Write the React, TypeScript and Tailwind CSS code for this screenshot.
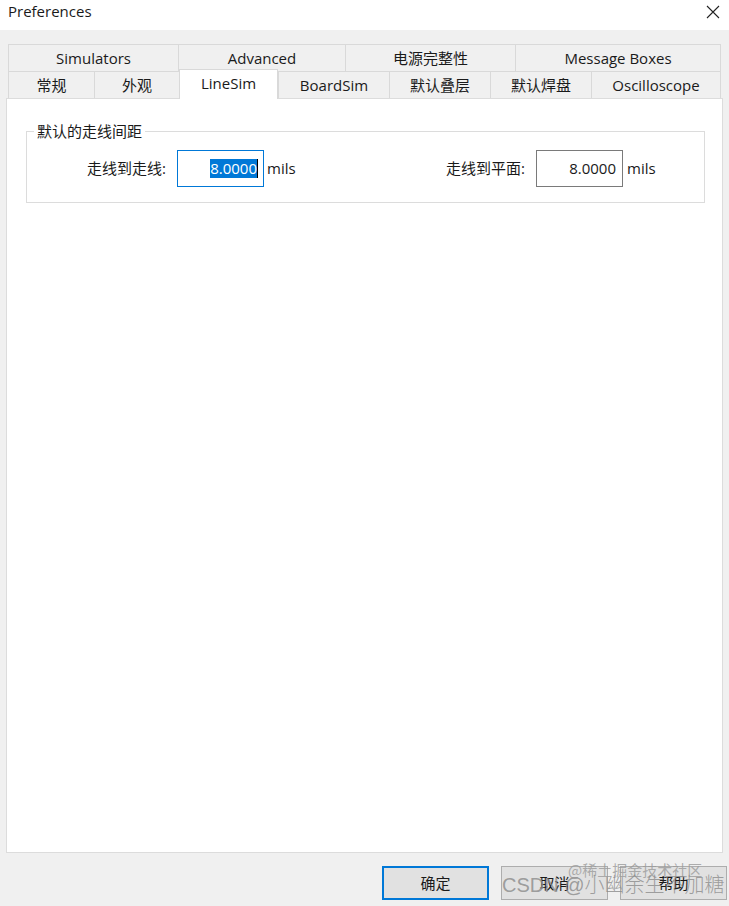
import React from "react";

const font = { fontFamily: '"Open Sans", "Noto Sans CJK SC", sans-serif' };

function Tab({ label, w, selected }: { label: string; w: number; selected?: boolean }) {
  return (
    <div
      style={{ width: w }}
      className={
        selected
          ? "relative z-10 -mt-[2px] -mb-[1px] flex h-[30px] items-start justify-center border border-b-0 border-[#d9d9d9] bg-white pt-[2px] text-[15px] text-[#1a1a1a]"
          : "flex h-[27px] items-center justify-center border-l border-t border-[#d9d9d9] bg-[#f0f0f0] text-[15px] text-[#1a1a1a] last:border-r"
      }
    >
      {label}
    </div>
  );
}

export default function App() {
  return (
    <div style={font} className="relative flex h-[906px] w-[729px] flex-col overflow-hidden bg-[#f0f0f0] text-[#1a1a1a]">
      {/* Title bar */}
      <div className="flex h-[30px] items-center justify-between bg-white pl-[8px] pr-[6px]">
        <span className="-mt-[7px] text-[15px]">Preferences</span>
        <svg width="16" height="16" viewBox="0 0 16 16" className="-mt-[6px] mr-[2px]">
          <path d="M2 2 L14 14 M14 2 L2 14" stroke="#222" strokeWidth="1.1" fill="none" />
        </svg>
      </div>

      {/* Tabs */}
      <div className="mt-[14px] flex flex-col pl-[8px]">
        <div className="flex">
          <Tab label="Simulators" w={170} />
          <Tab label="Advanced" w={167} />
          <Tab label="电源完整性" w={170} />
          <Tab label="Message Boxes" w={206} />
        </div>
        <div className="flex items-end">
          <Tab label="常规" w={86} />
          <Tab label="外观" w={85} />
          <Tab label="LineSim" w={99} selected />
          <Tab label="BoardSim" w={111} />
          <Tab label="默认叠层" w={101} />
          <Tab label="默认焊盘" w={101} />
          <Tab label="Oscilloscope" w={130} />
        </div>
      </div>

      {/* Panel */}
      <div className="mx-[6px] h-[755px] border border-[#dcdcdc] bg-white pl-[19px] pr-[17px] pt-[23px]">
        <fieldset className="h-[81px] border border-[#dcdcdc] px-0">
          <legend className="ml-[7px] px-[3px] text-[15px] leading-[18px]">默认的走线间距</legend>
          <div className="mt-[10px] flex items-center text-[15px]">
            <span className="w-[139px] text-right">走线到走线:</span>
            <div className="ml-[11px] flex h-[37px] w-[87px] items-center justify-end border border-[#0078d7] pr-[5px]">
              <span className="bg-[#0078d7] text-[15px] leading-[19px] text-white">8.0000</span>
              <span className="h-[19px] w-[1px] bg-black" />
            </div>
            <span className="ml-[3px] w-[35px] text-[15px]">mils</span>
            <span className="w-[223px] text-right">走线到平面:</span>
            <div className="ml-[11px] flex h-[37px] w-[87px] items-center justify-end border border-[#7a7a7a] pr-[6px]">
              <span className="text-[15px] leading-[19px]">8.0000</span>
            </div>
            <span className="ml-[4px] text-[15px]">mils</span>
          </div>
        </fieldset>
      </div>

      {/* Buttons */}
      <div className="mt-[13px] flex gap-[12px] pl-[382px]">
        <button className="flex h-[34px] w-[107px] items-center justify-center border-2 border-[#0078d7] bg-[#e1e1e1] text-[15px]">确定</button>
        <button className="flex h-[34px] w-[107px] items-center justify-center border border-[#adadad] bg-[#e1e1e1] text-[15px]">取消</button>
        <button className="flex h-[34px] w-[107px] items-center justify-center border border-[#adadad] bg-[#e1e1e1] text-[15px]">帮助</button>
      </div>

      {/* Watermark */}
      <div
        className="pointer-events-none absolute left-[568px] top-[861px] text-[15px] leading-[18px] text-[#9a9a9a]/80"
        style={{ fontFamily: '"Noto Sans CJK SC", sans-serif' }}
      >
        @稀土掘金技术社区
      </div>
      <div
        className="pointer-events-none absolute left-[502px] top-[872px] text-[20px] leading-[26px] text-[#8a8a8a]/80"
        style={{ fontFamily: '"Liberation Sans", "Noto Sans CJK SC", sans-serif', fontWeight: 300 }}
      >
        CSDN @小幽余生不加糖
      </div>
    </div>
  );
}
